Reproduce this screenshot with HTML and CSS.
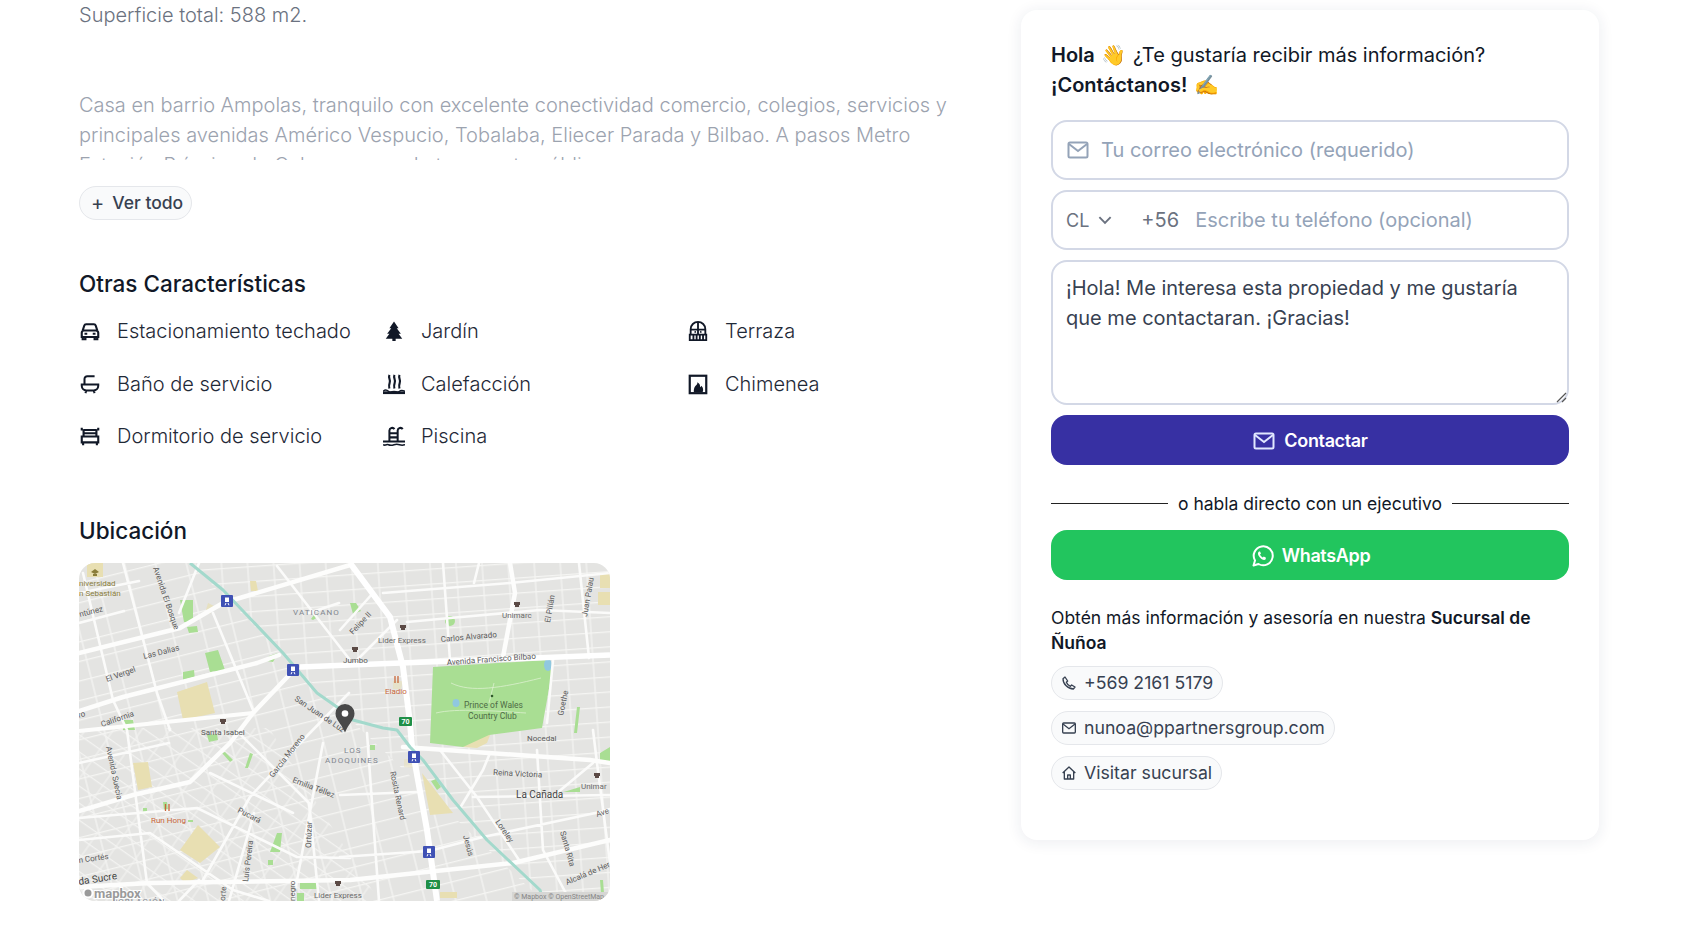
FILE: index.html
```html
<!DOCTYPE html>
<html lang="es">
<head>
<meta charset="utf-8">
<title>Propiedad</title>
<link rel="stylesheet" href="styles.css">
</head>
<body>
<main class="page">
  <section class="left">
    <p class="total">Superficie total: 588 m2.</p>
    <div class="desc"><p>Casa en barrio Ampolas, tranquilo con excelente conectividad comercio, colegios, servicios y principales avenidas Américo Vespucio, Tobalaba, Eliecer Parada y Bilbao. A pasos Metro Estación Príncipe de Gales y cerca de transporte público.</p></div>
    <button class="pill more"><span class="plus">+</span> Ver todo</button>
    <h2 class="h-other">Otras Características</h2>
    <ul class="features">
      <li><svg class="fi" viewBox="0 0 24 24"><path d="M4 11.500 5.800 6a2 2 0 0 1 1.900-1.400h8.600A2 2 0 0 1 18.200 6L20 11.500M3 14a2.500 2.500 0 0 1 2.500-2.500h13A2.500 2.500 0 0 1 21 14v4.500H3zM4 18.500V21h3v-2.500M17 18.500V21h3v-2.500M6 15h3M15 15h3" fill="none" stroke="currentColor" stroke-width="2.300"/></svg>Estacionamiento techado</li>
      <li><svg class="fi" viewBox="0 0 24 24"><path fill="currentColor" d="M12 1.500 17 9h-2l4.500 6H17l4 5.500H13.800V23h-3.600v-2.500H3L7 15H4.500L9 9H7z"/></svg>Jardín</li>
      <li><svg class="fi" viewBox="0 0 24 24"><path fill="none" stroke="currentColor" stroke-width="2" d="M4 16V10a8 8 0 0 1 16 0v6M12 2v14M4 10.500h16M3 16h18v6H3zM7 16v6M10.500 16v6M14 16v6M17.500 16v6"/><circle cx="9" cy="13" r="1" fill="currentColor"/><circle cx="15" cy="13" r="1" fill="currentColor"/></svg>Terraza</li>
      <li><svg class="fi" viewBox="0 0 24 24"><path fill="none" stroke="currentColor" stroke-width="2.200" d="M3 12.500h18v1.500a5 5 0 0 1-5 5H8a5 5 0 0 1-5-5zM6 12.500V6.500a3 3 0 0 1 3-3h8M8 19l-1 3M16 19l1 3"/></svg>Baño de servicio</li>
      <li><svg class="fi" viewBox="0 0 24 24"><path fill="none" stroke="currentColor" stroke-width="2.300" d="M7 2c-1.500 3.500 1.500 5 .3 8.500S6.500 15 7 17M12.500 2c-1.500 3.500 1.500 5 .3 8.500S12 15 12.500 17M18 2c-1.500 3.500 1.500 5 .3 8.500s-.8 4.500-.3 6.500"/><path fill="currentColor" d="M0 20h24v3H0z"/><path fill="none" stroke="currentColor" stroke-width="1.500" d="M0 20c2-2 4-2 6 0s4 0 6 0 4 2 6 0 4-1 6 0"/></svg>Calefacción</li>
      <li><svg class="fi" viewBox="0 0 24 24"><rect x="3" y="3" width="18" height="19" fill="none" stroke="currentColor" stroke-width="2.400"/><path fill="currentColor" d="M7.500 21h9.500c1-1.500 1-5-1.500-7-.2 1-.6 1.400-1.200 1.500.3-2.200-.8-4.500-3-5.500.3 2-1 2.800-2.200 4.200-1.300 1.500-2 4.800-1.600 6.800z"/></svg>Chimenea</li>
      <li><svg class="fi" viewBox="0 0 24 24"><path fill="none" stroke="currentColor" stroke-width="2.300" d="M5 12V4.500M19 12V4.500M5 5.500h14M5 9h14M3 12.500h18V19H3zM4.500 19v3M19.500 19v3M3 3v3M21 3v3" /></svg>Dormitorio de servicio</li>
      <li><svg class="fi" viewBox="0 0 24 24"><path fill="none" stroke="currentColor" stroke-width="2.200" d="M7 17V6a3 3 0 0 1 5.500-1.500M16 17V6a3 3 0 0 1 5.500-1.500M7 9h9M7 13.500h9M0 18h24"/><path fill="none" stroke="currentColor" stroke-width="1.700" d="M0 21.500c3 1.500 4-1 6 0s3 1 6 0 3-1 6 0 4 .5 6 0"/></svg>Piscina</li>
    </ul>
    <h2 class="h-map">Ubicación</h2>
    <div class="map">
      <svg viewBox="0 0 531 338" width="531" height="338" class="map-svg">
        <defs>
          <pattern id="gridw" width="30" height="19" patternUnits="userSpaceOnUse" patternTransform="rotate(-14)">
            <path d="M0 .6H30M14 0V19" stroke="#f5f5f3" stroke-width="1.300" fill="none"/>
          </pattern>
          <pattern id="grids" width="23" height="14" patternUnits="userSpaceOnUse" patternTransform="rotate(35)">
            <path d="M0 .6H23M9 0V14" stroke="#f3f3f1" stroke-width="1.100" fill="none"/>
          </pattern>
          <pattern id="gride" width="26" height="15" patternUnits="userSpaceOnUse" patternTransform="rotate(-4)">
            <path d="M0 .6H26M12 0V15" stroke="#f5f5f3" stroke-width="1.200" fill="none"/>
          </pattern>
          <clipPath id="west"><path d="M0 0H111L258 144 464 338H0z"/></clipPath>
          <clipPath id="south"><path d="M0 165H190L300 338H0z"/></clipPath>
          <clipPath id="east"><path d="M111 0H531V338H464L258 144z"/></clipPath>
        </defs>
        <rect width="531" height="338" fill="#e4e4e2"/>
        <rect width="531" height="338" fill="url(#gridw)" clip-path="url(#west)"/>
        <rect width="531" height="338" fill="url(#grids)" clip-path="url(#south)"/>
        <rect width="531" height="338" fill="url(#gride)" clip-path="url(#east)"/>
        <g fill="#e8dfb2">
          <path d="M8 0h16v14H8zM98 129l30-10 8 31-32 7zM54 200l15-1 4 25-14 3zM119 262l22 22-20 16-20-13zM108 307l11 8-13 5-5-5zM343 210l31 40-23 2zM361 329h17v6h-17zM521 10h10v15h-10zM519 29h12v13h-12zM384 184l17-17h12l-5 13-10 5z"/>
          <path d="M314 118h10l-2 8h-8z" opacity=".5"/><path d="M171 18l6 0 2 10h-7z"/><path d="M129 40l6 3-4 8-4-4z" opacity=".7"/><path d="M325 196l11 0-2 9-9-1z" opacity=".4"/>
        </g>
        <g fill="#a9de93">
          <path d="M354 104 470 97 474 103 463 165 410 172 384 184 351 180z"/>
          <path d="M101 37h13v22h-9zM108 64l10-1 1 6-9 1zM126 90l13-3 7 20-15 2zM104 109l11-2 1 10-12 1zM44 157h10l2 10H44zM271 40h6l5 8-8 3zM190 93l9-3-5 9-6-1zM128 172l10-1 1 6-9 2zM143 190l3-1 8 8-3 2zM166 205l5-15 3 1-5 14zM198 270l5 0-2 19-10 0zM189 297h5v5h-5zM221 320h18v6h-18zM218 330h7v8h-7zM84 239l4 0 1 8-4 0zM64 245h4v5h-4zM291 182h5v5h-5zM488 228l13-4v5h-17zM521 190l10-6v15h-10zM498 144h3l-3 26h-3zM521 317h3l1 13h-3zM235 52l4 2-5 3-2-1zM109 257h5v2h-5zM352 218l5-2 5 8-4 3z"/>
          <circle cx="371" cy="58" r="5"/>
        </g>
        <g fill="none" stroke="#dcf0cf" stroke-width=".8"><path d="M357 150c20-5 60-2 90 0M415 120l-5 20M372 120c20 10 50 5 90-5"/></g>
        <g fill="#90c8df"><ellipse cx="469" cy="102" rx="4" ry="6"/><ellipse cx="377" cy="140" rx="3.500" ry="4"/></g>
        <g fill="none" stroke="#fbfbfa" stroke-width="2.600" stroke-linecap="round" stroke-linejoin="round">
          <path d="M4 10 34 137 48 167 68 320 85 338M44 0 78 130 91 167M0 255 118 245 218 294 271 295M0 277 71 270 154 327 190 338M124 317 171 234 224 177 270 130M131 210 214 250M244 180 214 338M261 232 338 229M361 187 398 234 440 297M381 245 404 207 411 190M478 230 514 200M404 274 521 249 531 246M458 187 464 287 491 338M514 167 518 200 531 300M198 3 271 97M134 50 174 147M261 67 294 30M278 97 318 57M304 30 431 20 531 10M328 59 371 55 461 47 531 50M474 97 468 160M394 234 531 232M261 294 350 288 404 274M0 200 90 180M0 30 60 18M120 0 100 50M160 170 230 240 240 338M288 170 300 338M120 317 100 338M150 338 175 250"/>
          <path d="M0 60 45 48M364 0 371 97M500 0 510 95M400 0 395 20M62 130 134 110M230 50 260 40"/>
        </g>
        <g fill="none" stroke="#fdfdfc" stroke-width="4.500" stroke-linecap="round" stroke-linejoin="round">
          <path d="M0 90 101 65 144 40 271 2"/>
          <path d="M0 148 44 134 178 100 200 92"/>
          <path d="M214 108 174 150 151 180 111 219 54 232 0 248"/>
          <path d="M0 324 71 320 271 317 434 300 531 277"/>
          <path d="M324 184 511 197 531 200"/>
          <path d="M431 0 436 30 424 94"/>
        </g>
        <path d="M0 168 174 150" fill="none" stroke="#fdfdfc" stroke-width="4"/>
        <path d="M221 104 271 102 531 92" fill="none" stroke="#fff" stroke-width="5.500"/>
        <path d="M271 0 311 54 324 104 331 160 333 184 348 267 358 338" fill="none" stroke="#fff" stroke-width="6"/>
        <path d="M111 0 144 27 204 90 238 130 258 144 274 157 304 165 318 167 331 184 344 197 374 237 408 277 461 327 464 338" fill="none" stroke="#a3d9cc" stroke-width="3" stroke-linejoin="round"/>
        <g class="metro">
          <rect x="142" y="32" width="12" height="12" rx="1"/>
          <rect x="208" y="101" width="12" height="12" rx="1"/>
          <rect x="329" y="188" width="12" height="12" rx="1"/>
          <rect x="344" y="283" width="12" height="12" rx="1"/>
        </g>
        <g class="metro-w">
          <path d="M146 34.500h4v4.500h-4zM146.500 40l-1 2.300h1l1-2.300zM149.500 40l1 2.300h-1l-1-2.300z"/>
          <path d="M212 103.500h4v4.500h-4zM212.500 109l-1 2.300h1l1-2.300zM215.500 109l1 2.300h-1l-1-2.300z"/>
          <path d="M333 190.500h4v4.500h-4zM333.500 196l-1 2.300h1l1-2.300zM336.500 196l1 2.300h-1l-1-2.300z"/>
          <path d="M348 285.500h4v4.500h-4zM348.500 291l-1 2.300h1l1-2.300zM351.500 291l1 2.300h-1l-1-2.300z"/>
        </g>
        <g fill="#1f8f47">
          <rect x="320" y="154" width="13" height="9" rx="1"/>
          <rect x="347" y="317" width="14" height="9" rx="1"/>
        </g>
        <g class="mt badge-t">
          <text x="322.500" y="161">70</text>
          <text x="350" y="324">70</text>
        </g>
        <g fill="#5b4a45">
          <path d="M141 156h6v3h-1v2h-4v-2h-1zM321 62h6v3h-1v2h-4v-2h-1zM273 84h6v3h-1v2h-4v-2h-1zM435 39h6v3h-1v2h-4v-2h-1zM256 318h6v3h-1v2h-4v-2h-1zM515 210h6v3h-1v2h-4v-2h-1z"/>
        </g>
        <path d="M316 113v7M319 113v7M86.500 241v7M90 241v7" stroke="#c8663a" stroke-width="1.300"/>
        <path d="M12 9l4-3 4 3-4 2zM14 11h4v2h-4z" fill="#8a7d3a"/>
        <circle cx="413" cy="133" r="1.300" fill="#2f5a2a"/>
        <g class="mt">
          <text x="0" y="23" class="gold">niversidad</text>
          <text x="0" y="33" class="gold">n Sebastián</text>
          <text x="1" y="54" transform="rotate(-14 1 54)">ntúnez</text>
          <text x="74" y="5" transform="rotate(71 74 5)">Avenida El Bosque</text>
          <text x="65" y="96" transform="rotate(-14 65 96)">Las Dalias</text>
          <text x="28" y="119" transform="rotate(-20 28 119)">El Vergel</text>
          <text x="23" y="164" transform="rotate(-19 23 164)">California</text>
          <text x="0" y="155" transform="rotate(-19 0 155)">ro</text>
          <text x="214" y="52" class="wide">VATICANO</text>
          <text x="215" y="137" transform="rotate(34 215 137)">San Juan de Luz</text>
          <text x="274" y="72" transform="rotate(-47 274 72)">Felipe II</text>
          <text x="299" y="80" class="dark">Lider Express</text>
          <text x="362" y="79" transform="rotate(-5 362 79)">Carlos Alvarado</text>
          <text x="264" y="100">Jumbo</text>
          <text x="423" y="55" class="dark">Unimarc</text>
          <text x="471" y="60" transform="rotate(-80 471 60)">El Pillán</text>
          <text x="508" y="54" transform="rotate(-80 508 54)">Juan Palau</text>
          <text x="368" y="102" transform="rotate(-4 368 102)">Avenida Francisco Bilbao</text>
          <text x="385" y="145" class="park">Prince of Wales</text>
          <text x="389" y="156" class="park">Country Club</text>
          <text x="306" y="131" class="orange">Eladio</text>
          <text x="484" y="153" transform="rotate(-78 484 153)">Goethe</text>
          <text x="122" y="172">Santa Isabel</text>
          <text x="27" y="184" transform="rotate(78 27 184)">Avenida Suecia</text>
          <text x="194" y="215" transform="rotate(-52 194 215)">García Moreno</text>
          <text x="213" y="219" transform="rotate(21 213 219)">Emilia Téllez</text>
          <text x="158" y="249" transform="rotate(27 158 249)">Pucará</text>
          <text x="169" y="319" transform="rotate(-83 169 319)">Luis Pereira</text>
          <text x="232" y="285" transform="rotate(-88 232 285)">Ortúzar</text>
          <text x="72" y="260" class="orange">Run Hong</text>
          <text x="0" y="300" transform="rotate(-8 0 300)">n Cortés</text>
          <text x="0" y="322" transform="rotate(-9 0 322)" class="big">da Sucre</text>
          <text x="33" y="341" class="wide">POBLACIÓN</text>
          <text x="146" y="338" transform="rotate(-85 146 338)">orte</text>
          <text x="216" y="338" transform="rotate(-90 216 338)">negro</text>
          <text x="235" y="335" class="dark">Lider Express</text>
          <text x="265" y="190" class="wide">LOS</text>
          <text x="246" y="200" class="wide">ADOQUINES</text>
          <text x="311" y="209" transform="rotate(78 311 209)">Rosita Renard</text>
          <text x="448" y="178">Nocedal</text>
          <text x="414" y="212" transform="rotate(3 414 212)">Reina Victoria</text>
          <text x="437" y="235" class="big">La Cañada</text>
          <text x="502" y="226" class="dark">Unimar</text>
          <text x="416" y="259" transform="rotate(55 416 259)">Loreley</text>
          <text x="384" y="273" transform="rotate(75 384 273)">Jesús</text>
          <text x="481" y="269" transform="rotate(74 481 269)">Santa Rita</text>
          <text x="488" y="322" transform="rotate(-23 488 322)">Alcalá de Her</text>
          <text x="518" y="254" transform="rotate(-18 518 254)">Ave</text>
        </g>
        <rect x="433" y="329" width="98" height="9" fill="#d6d6d4"/>
        <text x="435" y="336" class="attrib">© Mapbox © OpenStreetMap</text>
        <circle cx="9" cy="330" r="4.500" fill="#9a9a9a" stroke="#fff" stroke-width="2"/>
        <text x="15" y="335" class="mapbox">mapbox</text>
        <path d="M266 141a9.500 9.500 0 0 1 9.500 9.500c0 6-5.500 9.500-9.500 19-4-9.500-9.500-13-9.500-19a9.500 9.500 0 0 1 9.500-9.500z" fill="#484848"/>
        <circle cx="266" cy="150.500" r="3.300" fill="#fff"/>
      </svg>
    </div>
  </section>
  <aside class="card">
    <p class="hello"><b>Hola</b> <span class="emoji">👋</span> ¿Te gustaría recibir más información?<br><b>¡Contáctanos!</b> <span class="emoji">✍️</span></p>
    <div class="field">
      <svg class="i24" viewBox="0 0 24 24"><rect x="2.500" y="4.500" width="19" height="15" rx="1.500" fill="none" stroke="currentColor" stroke-width="2"/><path d="m3 6 9 7 9-7" fill="none" stroke="currentColor" stroke-width="2"/></svg>
      <span class="ph">Tu correo electrónico (requerido)</span>
    </div>
    <div class="field phone">
      <span class="cc">CL</span>
      <svg class="chev" viewBox="0 0 16 16"><path d="m3 5.500 5 5 5-5" fill="none" stroke="currentColor" stroke-width="1.700"/></svg>
      <span class="code">+56</span>
      <span class="ph">Escribe tu teléfono (opcional)</span>
    </div>
    <div class="field area">¡Hola! Me interesa esta propiedad y me gustaría que me contactaran. ¡Gracias!
      <svg class="grip" viewBox="0 0 12 12"><path d="M11 2 2 11M11 7l-4 4" stroke="#555" stroke-width="1.200" fill="none"/></svg>
    </div>
    <button class="btn contact"><svg class="i24" viewBox="0 0 24 24"><rect x="2.500" y="4.500" width="19" height="15" rx="1.500" fill="none" stroke="currentColor" stroke-width="2"/><path d="m3 6 9 7 9-7" fill="none" stroke="currentColor" stroke-width="2"/></svg>Contactar</button>
    <div class="divider"><span>o habla directo con un ejecutivo</span></div>
    <button class="btn wa"><svg class="i24" viewBox="0 0 24 24"><path d="M3.500 21.500 5 16.500A9.500 9.500 0 1 1 8.500 20z" fill="none" stroke="currentColor" stroke-width="2" stroke-linejoin="round"/><path d="M9 7.500c-1.500 1-1.500 3 .500 5.500s4.500 3.500 6 2.500l.500-1.800-2.200-1.200-1 1c-1-.300-2.300-1.700-2.800-3l1-1L10 7.500z" fill="currentColor"/></svg>WhatsApp</button>
    <p class="branch">Obtén más información y asesoría en nuestra <b>Sucursal de Ñuñoa</b></p>
    <div class="contacts">
      <a class="pill"><svg class="i16" viewBox="0 0 24 24"><path d="M6 3 3 5.500c0 8 7.500 15.500 15.500 15.500l2.500-3-5-3-2 2c-2.500-1-5-3.500-6-6l2-2z" fill="none" stroke="currentColor" stroke-width="2" stroke-linejoin="round"/></svg>+569 2161 5179</a>
      <a class="pill"><svg class="i16" viewBox="0 0 24 24"><rect x="2.500" y="4.500" width="19" height="15" rx="1.500" fill="none" stroke="currentColor" stroke-width="2"/><path d="m3 6 9 7 9-7" fill="none" stroke="currentColor" stroke-width="2"/></svg>nunoa@ppartnersgroup.com</a>
      <a class="pill"><svg class="i16" viewBox="0 0 24 24"><path d="M2.500 12 12 3l9.500 9M5 10v11h14V10M10 21v-6h4v6" fill="none" stroke="currentColor" stroke-width="2" stroke-linejoin="round"/></svg>Visitar sucursal</a>
    </div>
  </aside>
</main>
</body>
</html>
```
FILE: styles.css
```css
* { box-sizing: border-box; }
html, body { margin: 0; background: #fff; }
body { font-family: Inter, "Noto Sans", sans-serif; color: #111827; overflow: hidden; height: 942px; }
p, h2, ul { margin: 0; padding: 0; }
.page { display: flex; align-items: flex-start; justify-content: space-between; padding: 0 87px 0 79px; }
.left { width: 880px; }
.total { font-size: 20px; font-weight: 300; line-height: 30px; color: #6b7280; }
.desc { margin-top: 60px; height: 70px; overflow: hidden; font-size: 20px; font-weight: 300; line-height: 30px; color: #9ca3af; }
.pill { display: inline-flex; align-items: center; gap: 7px; height: 34px; padding: 0 9px; border: 1px solid #e5e7eb; border-radius: 17px; background: #f9fafb; font: 400 17.700px/24px Inter, sans-serif; color: #374151; }
.more { margin-top: 26px; padding: 0 8px 0 11px; font-size: 17.500px; font-weight: 500; gap: 8px; display: flex; }
.plus { font-weight: 400; font-size: 20px; }
h2 { font-weight: 500; font-size: 22.500px; line-height: 30px; color: #111827; }
.h-other { margin-top: 49px; }
.features { list-style: none; display: grid; grid-template-columns: repeat(3, 304px); grid-auto-rows: 52.500px; margin-top: 6px; font-size: 20px; font-weight: 300; color: #1f2937; }
.features li { display: flex; align-items: center; gap: 16px; }
.fi { width: 22px; height: 22px; flex: none; color: #111827; }
.h-map { margin-top: 53px; }
.map { width: 531px; height: 338px; margin-top: 17px; border-radius: 16px; overflow: hidden; }
.map-svg { display: block; }
.metro { fill: #3f51b5; }
.metro-w { fill: #fff; }
.mt text { font: 400 8px Roboto, sans-serif; fill: #5a5a5a; }
.mt text.wide { fill: #80858f; letter-spacing: 1.100px; font-size: 8px; }
.mt text.gold { fill: #8a7d3a; }
.mt text.orange { fill: #c8663a; }
.mt text.big { font-size: 10px; fill: #444; }
.mt text.dark { fill: #6a6a6a; }
.mt text.park { fill: #4e6a45; font-size: 8.500px; }
.badge-t text { fill: #fff; font-size: 7px; font-weight: 700; }
.attrib { font: 7px Roboto, sans-serif; fill: #858585; }
.mapbox { font: 700 13px Roboto, sans-serif; fill: #9a9a9a; stroke: #fff; stroke-width: 2px; paint-order: stroke; }
.card { width: 578px; height: 830px; margin-top: 10px; padding: 30px; border-radius: 16px; background: #fff; box-shadow: 0 2px 14px 2px rgba(30, 40, 80, .07); }
.hello { font-size: 20px; line-height: 30px; margin-bottom: 20px; color: #111827; }
.hello b { font-weight: 600; }
.emoji { font-family: "Noto Color Emoji", "Noto Sans", sans-serif; margin: 0 1px; }
.field { display: flex; align-items: center; height: 60px; padding: 0 13px; border: 2px solid #d3d8e6; border-radius: 16px; font-size: 20px; color: #6b7280; margin-bottom: 10px; }
.i24 { width: 24px; height: 24px; flex: none; }
.field > .i24 { color: #94a3b8; margin-right: 11px; }
.ph { color: #94a3b8; }
.cc { font-size: 18px; }
.chev { width: 18px; height: 18px; margin-left: 7px; }
.code { margin-left: 27px; margin-right: 16px; }
.area { position: relative; display: block; height: 145px; padding: 11px 13px; font-size: 20px; line-height: 30px; color: #374151; }
.grip { position: absolute; right: 0; bottom: 0; width: 12px; height: 12px; }
.btn { display: flex; align-items: center; justify-content: center; gap: 8px; width: 100%; height: 50px; padding: 2px 0 0; border: 0; border-radius: 16px; font: 600 18px/24px Inter, sans-serif; letter-spacing: -.35px; color: #fff; }
.contact { background: #3730a3; }
.contact .i24 { color: #e0e7ff; }
.wa { background: #22c55e; }
.divider { display: flex; align-items: center; gap: 10px; margin: 26px 0 14px; height: 25px; font-size: 17.500px; color: #111827; }
.divider::before, .divider::after { content: ""; flex: 1; height: 1px; background: #222; }
.branch { margin-top: 25px; font-size: 17.500px; line-height: 25px; color: #111827; }
.branch b { font-weight: 600; }
.contacts { display: flex; flex-direction: column; align-items: flex-start; gap: 11px; margin-top: 11px; }
.i16 { width: 16px; height: 16px; flex: none; }
```
